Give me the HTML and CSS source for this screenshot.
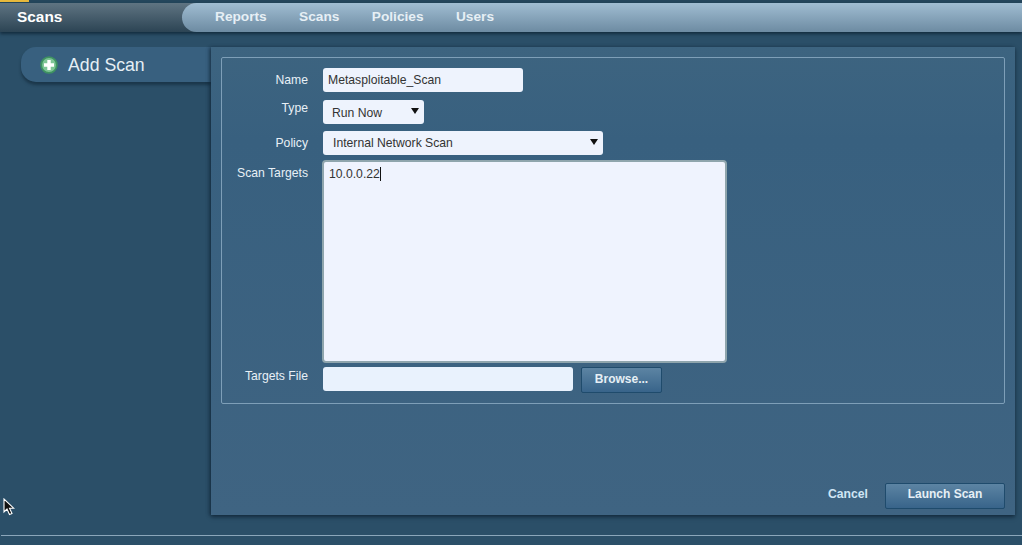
FILE: index.html
```html
<!DOCTYPE html>
<html lang="en">
<head>
    <meta charset="UTF-8">
    <title>Scans</title>
    <link rel="stylesheet" href="styles.css">
</head>
<body>
    <div class="strip"><span class="strip-tab"></span></div>
    <div class="header">
        <div class="title">Scans</div>
        <nav class="nav">
            <a>Reports</a>
            <a>Scans</a>
            <a>Policies</a>
            <a>Users</a>
        </nav>
    </div>
    <div class="main">
        <div class="side">
            <div class="side-item">
                <svg class="add-icon" width="18" height="18" viewBox="0 0 18 18">
                    <circle cx="9" cy="9" r="7.800" fill="#7fc596" stroke="#3f9361" stroke-width="1.800"/>
                    <path d="M7.300 4h3.400v3.300H14v3.400h-3.300V14H7.300v-3.300H4V7.300h3.300z" fill="#fff"/>
                </svg>
                <span>Add Scan</span>
            </div>
        </div>
        <div class="panel">
            <div class="fields">
                <div class="row row-name">
                    <label>Name</label>
                    <div class="field w-name">Metasploitable_Scan</div>
                </div>
                <div class="row row-type">
                    <label>Type</label>
                    <div class="field select w-type">Run Now<i class="arrow"></i></div>
                </div>
                <div class="row row-policy">
                    <label>Policy</label>
                    <div class="field select w-policy">Internal Network Scan<i class="arrow"></i></div>
                </div>
                <div class="row row-targets">
                    <label>Scan Targets</label>
                    <div class="targets"><span class="caret">10.0.0.22</span></div>
                </div>
                <div class="row row-file">
                    <label>Targets File</label>
                    <div class="field w-file"></div>
                    <div class="btn btn-browse">Browse...</div>
                </div>
            </div>
            <div class="actions">
                <a class="cancel">Cancel</a>
                <div class="btn btn-launch">Launch Scan</div>
            </div>
        </div>
    </div>
    <div class="foot-line"></div>
    <svg class="cursor" width="12" height="18" viewBox="0 0 12 18">
        <path d="M1 1v13l3-3 2.500 5.500 2.500-1-2.500-5.300h4.200z" fill="#111" stroke="#fff" stroke-width="1.100"/>
    </svg>
</body>
</html>
```

FILE: styles.css
```css
html, body {
    margin: 0;
    height: 545px;
    overflow: hidden;
}
body {
    font-family: 'Liberation Sans', Arial, sans-serif;
    background: #2b4f68;
    color: #fff;
    font-size: 12.2px;
    position: relative;
}
.strip {
    height: 3px;
    background: #24465c;
}
.strip-tab {
    display: block;
    width: 29px;
    height: 2px;
    background: #e8b93c;
}
.header {
    display: flex;
    height: 29px;
    background: linear-gradient(#5f7482, #2c4454);
    box-shadow: 0 2px 3px rgba(10, 30, 45, 0.7);
}
.title {
    width: 165px;
    padding-left: 17px;
    font-size: 15.4px;
    font-weight: bold;
    line-height: 28px;
}
.nav {
    flex: 1;
    display: flex;
    gap: 32.4px;
    padding-left: 33px;
    border-radius: 15px 0 0 15px;
    background: linear-gradient(#a0bdd2, #6d8ba2);
}
.nav a {
    font-size: 13.7px;
    font-weight: bold;
    line-height: 27px;
    color: #e6eff5;
}
.main {
    display: flex;
    padding: 15px 7px 0 21px;
}
.side {
    width: 190px;
}
.side-item {
    display: flex;
    align-items: center;
    gap: 10px;
    height: 35px;
    padding-left: 19px;
    border-radius: 15px 0 0 15px;
    background: #38607f;
    box-shadow: 0 3px 3px rgba(15, 35, 50, 0.55);
    font-size: 17.7px;
    color: #e6eff5;
}
.side-item span {
    margin-top: 1px;
}
.add-icon {
    flex: none;
}
.panel {
    flex: 1;
    height: 468px;
    box-sizing: border-box;
    padding: 10px 10px 0 10px;
    background: linear-gradient(#3d6480, #38607f 20%, #3f6482);
    box-shadow: 0 2px 4px rgba(12, 30, 45, 0.7), -2px 0 3px rgba(12, 30, 45, 0.35);
    display: flex;
    flex-direction: column;
}
.fields {
    height: 345px;
    border: 1px solid #7e9fb8;
    border-radius: 2px;
    display: flex;
    flex-direction: column;
}
.row {
    display: flex;
    gap: 15px;
}
.row label {
    width: 86px;
    flex: none;
    text-align: right;
    color: #e8f0f6;
}
.row-name {
    margin-top: 10px;
    height: 32px;
}
.row-name label { line-height: 24px; }
.row-type {
    height: 31px;
}
.row-type label { line-height: 17px; }
.row-policy {
    height: 29px;
}
.row-policy label { line-height: 24px; }
.row-targets {
    height: 207px;
}
.row-targets label {
    line-height: 26px;
}
.row-file label { line-height: 18px; }
.field {
    height: 24px;
    box-sizing: border-box;
    padding-left: 5px;
    border-radius: 3px;
    background: #eef3fd;
    color: #333;
    line-height: 24px;
    position: relative;
}
.w-name { width: 200px; }
.w-type { width: 101px; padding-left: 9px; line-height: 26px; }
.w-policy { width: 280px; padding-left: 10px; line-height: 24px; }
.w-file { width: 250px; background: #e9f2fd; }
.arrow {
    position: absolute;
    right: 5px;
    top: 8px;
    border-left: 4.5px solid transparent;
    border-right: 4.5px solid transparent;
    border-top: 6px solid #111;
}
.targets {
    width: 405px;
    height: 203px;
    margin-left: -1px;
    box-sizing: border-box;
    padding: 5px 5px;
    border: 2px solid #8fa5ad;
    border-radius: 4px;
    background: #eff3fe;
    color: #333;
    line-height: 14px;
}
.caret {
    border-right: 1px solid #111;
}
.btn {
    box-sizing: border-box;
    border: 1px solid #1f4b6c;
    border-radius: 2px;
    background: linear-gradient(#5c84a3, #38648a);
    color: #e6eff5;
    font-size: 12px;
    font-weight: bold;
    text-align: center;
}
.btn-browse {
    width: 81px;
    height: 26px;
    margin-left: -7px;
    line-height: 23px;
}
.actions {
    margin-top: auto;
    display: flex;
    align-items: center;
    gap: 17px;
    justify-content: flex-end;
    padding-bottom: 6px;
}
.cancel {
    color: #cfe6f5;
    font-weight: bold;
    margin-top: -5px;
}
.btn-launch {
    width: 120px;
    height: 26px;
    line-height: 21px;
}
.foot-line {
    position: absolute;
    left: 1px;
    right: 0;
    top: 535px;
    height: 1px;
    background: #8ba6ba;
}
.cursor {
    position: absolute;
    left: 3px;
    top: 498px;
}
```
